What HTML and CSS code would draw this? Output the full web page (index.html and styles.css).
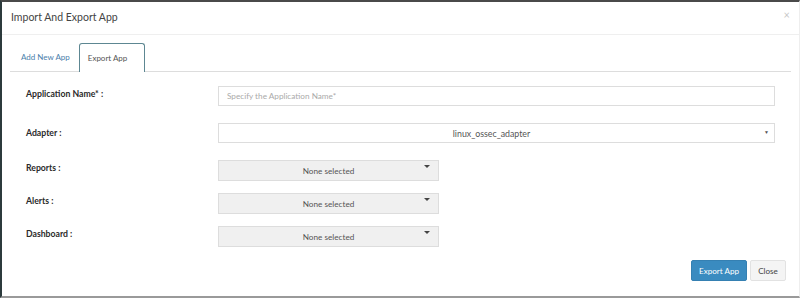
FILE: index.html
```html
<!DOCTYPE html>
<html>
<head>
<meta charset="utf-8">
<link rel="stylesheet" href="styles.css">
</head>
<body>
<div class="modal">
  <div class="modal-header">
    <span class="title">Import And Export App</span>
    <span class="close">×</span>
  </div>
  <div class="modal-body">
    <div class="tabs">
      <span class="tab">Add New App</span>
      <span class="tab active">Export App</span>
    </div>
    <div class="form">
      <div class="row row-a">
        <label class="lbl">Application Name* :</label>
        <div class="field"><div class="input placeholder">Specify the Application Name*</div></div>
      </div>
      <div class="row row-b">
        <label class="lbl lbl-mid">Adapter :</label>
        <div class="field"><div class="input select"><span class="sel-text">linux_ossec_adapter</span><span class="caret-sm">▼</span></div></div>
      </div>
      <div class="row row-c">
        <label class="lbl">Reports :</label>
        <div class="field"><div class="multi"><span>None selected</span><span class="caret"></span></div></div>
      </div>
      <div class="row row-d">
        <label class="lbl">Alerts :</label>
        <div class="field"><div class="multi"><span>None selected</span><span class="caret"></span></div></div>
      </div>
      <div class="row row-d">
        <label class="lbl">Dashboard :</label>
        <div class="field"><div class="multi"><span>None selected</span><span class="caret"></span></div></div>
      </div>
    </div>
    <div class="footer">
      <span class="btn btn-primary">Export App</span>
      <span class="btn btn-default">Close</span>
    </div>
  </div>
</div>
</body>
</html>
```
FILE: styles.css
```css
* { box-sizing: border-box; }
html, body { margin: 0; padding: 0; background: #fff; }
body {
  font-family: Lato, "Open Sans", sans-serif;
  color: #333;
  width: 800px;
  height: 299px;
  overflow: hidden;
}
.modal {
  width: 800px;
  height: 298px;
  border-top: 2px solid #4a4a4a;
  border-left: 2px solid #2c3a3c;
  border-bottom: 2px solid #9a9a9a;
  border-right: 1px solid #eeeeee;
  background: #fff;
}
.modal-header {
  height: 33px;
  border-bottom: 1px solid #efefef;
  display: flex;
  align-items: center;
  justify-content: space-between;
  padding: 0 9px 2px 9px;
}
.title {
  font-size: 10.5px;
  color: #444;
}
.close {
  font-size: 11px;
  color: #c8c8c8;
  margin-top: -6px;
}
.modal-body {
  padding: 9px 8px 0 8px;
}
.tabs {
  height: 28px;
  border-bottom: 1px solid #ddd;
  display: flex;
  align-items: flex-end;
}
.tab {
  font-size: 8px;
  color: #4a7eab;
  height: 28px;
  line-height: 28px;
  padding: 0 10px 0 11px;
  white-space: nowrap;
}
.tab.active {
  color: #555;
  border: 1px solid #5d8792;
  border-bottom: none;
  border-radius: 3px 3px 0 0;
  padding: 0 0 0 8px;
  width: 66px;
  height: 29px;
  margin-left: -1px;
  margin-bottom: -1px;
  background: #fff;
}
.form {
  padding-top: 14px;
}
.row {
  display: flex;
  align-items: center;
  height: 20px;
}
.row-b { margin-top: 17px; }
.row-c { margin-top: 17px; }
.row-d { margin-top: 13px; }
.lbl {
  width: 208px;
  padding-left: 16px;
  font-size: 8.7px;
  font-weight: 700;
  color: #2a2a2a;
  align-self: flex-start;
  padding-top: 2px;
}
.lbl-mid { padding-top: 4px; }
.field { flex: 0 0 557px; }
.input {
  height: 20px;
  border: 1px solid #ddd;
  font-size: 8.2px;
  display: flex;
  align-items: center;
  padding: 0 8px;
}
.placeholder { color: #aaa; }
.select {
  position: relative;
  justify-content: center;
  color: #555;
  font-size: 8.8px;
}
.sel-text { margin-left: -10px; }
.caret-sm {
  position: absolute;
  right: 5px;
  top: 5px;
  font-size: 5px;
  color: #555;
}
.multi {
  position: relative;
  width: 221px;
  height: 21px;
  background: #f0f0f0;
  border: 1px solid #ddd;
  font-size: 8.2px;
  color: #555;
  display: flex;
  align-items: center;
  justify-content: center;
  padding-top: 2px;
}
.caret {
  position: absolute;
  right: 8px;
  top: 4px;
  width: 0;
  height: 0;
  border-left: 3px solid transparent;
  border-right: 3px solid transparent;
  border-top: 3px solid #444;
}
.footer {
  display: flex;
  justify-content: flex-end;
  gap: 3px;
  margin-top: 14px;
  padding-right: 5px;
}
.btn {
  height: 21px;
  display: flex;
  align-items: center;
  font-size: 8.1px;
  border-radius: 2px;
  border: 1px solid;
  white-space: nowrap;
}
.btn-primary {
  background: #3a8bc0;
  border-color: #3580b2;
  color: #fff;
  width: 56px;
  justify-content: center;
}
.btn-default {
  background: #f4f4f4;
  border-color: #e2e2e2;
  color: #444;
  width: 36px;
  justify-content: center;
}
```
